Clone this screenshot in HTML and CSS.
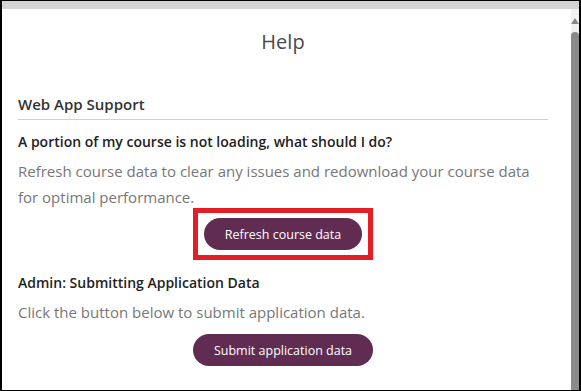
FILE: index.html
```html
<!DOCTYPE html>
<html lang="en">
<head>
    <meta charset="UTF-8">
    <link rel="stylesheet" href="styles.css">
</head>
<body>

<div class="frame">
    <div class="top-bar"></div>
    <div class="window">
        <!-- Help panel -->
        <div class="help-panel">
            <h1 class="help-title">Help</h1>

            <h2 class="section-title">Web App Support</h2>

            <div class="help-item">
                <h3 class="item-question">A portion of my course is not loading, what should I do?</h3>
                <p class="item-text">Refresh course data to clear any issues and redownload your course data for optimal performance.</p>
                <div class="item-actions">
                    <span class="highlight">
                        <button class="pill-button">Refresh course data</button>
                    </span>
                </div>
            </div>

            <div class="help-item admin-item">
                <h3 class="item-question">Admin: Submitting Application Data</h3>
                <p class="item-text">Click the button below to submit application data.</p>
                <div class="item-actions">
                    <button class="pill-button">Submit application data</button>
                </div>
            </div>
        </div>

        <!-- Scrollbar -->
        <div class="scrollbar">
            <div class="scroll-arrow"></div>
            <div class="scroll-thumb"></div>
        </div>
    </div>
</div>

</body>
</html>
```

FILE: styles.css
```css
/* General */
* {
    box-sizing: border-box;
}

body {
    margin: 0;
    font-family: "Open Sans", "Liberation Sans", sans-serif;
    background: white;
}

.frame {
    width: 581px;
    height: 391px;
    border: 1px solid #000;
    border-left-width: 2px;
    border-right-width: 2px;
    display: flex;
    flex-direction: column;
    overflow: hidden;
}

.top-bar {
    height: 8px;
    background-color: #d3d3d3;
    flex-shrink: 0;
}

.window {
    flex-grow: 1;
    display: flex;
    min-height: 0;
}

/* Help panel */
.help-panel {
    flex-grow: 1;
    padding: 0 23px 0 16px;
    overflow: hidden;
}

.help-title {
    margin: 20px 0 0;
    font-size: 20px;
    font-weight: normal;
    line-height: 26px;
    color: #4a4a4a;
    text-align: center;
}

.section-title {
    margin: 39px 0 0;
    padding-bottom: 5px;
    font-size: 15px;
    font-weight: 600;
    line-height: 20px;
    color: #333;
    border-bottom: 1px solid #d0d0d0;
}

.help-item {
    margin-top: 12px;
}

.admin-item {
    margin-top: 23px;
}

.item-question {
    margin: 0;
    font-size: 14px;
    font-weight: 600;
    line-height: 20px;
    color: #222;
}

.item-text {
    margin: 6px 0 0;
    font-size: 15px;
    line-height: 26px;
    color: #777;
}

.item-actions {
    display: flex;
    justify-content: center;
    margin-top: 8px;
}

.admin-item .item-actions {
    margin-top: 9px;
}

/* Buttons */
.pill-button {
    display: block;
    height: 32px;
    padding: 0 21px;
    border: none;
    border-radius: 16px;
    background-color: #612c51;
    color: white;
    font-family: inherit;
    font-size: 12.5px;
    cursor: pointer;
}

/* Red annotation box around a button */
.highlight {
    display: block;
    margin: -10px -11px;
    padding: 5px 6px;
    border: 5px solid #e31e24;
}

/* Scrollbar */
.scrollbar {
    width: 8px;
    flex-shrink: 0;
    background-color: #f1f1f1;
    display: flex;
    flex-direction: column;
    align-items: center;
}

.scroll-arrow {
    margin-top: 9px;
    width: 0;
    height: 0;
    border-left: 4px solid transparent;
    border-right: 4px solid transparent;
    border-bottom: 6px solid #8a8a8a;
}

.scroll-thumb {
    margin-top: 8px;
    width: 8px;
    flex-grow: 1;
    background-color: #8a8a8a;
    border-radius: 4px 4px 0 0;
}
```
